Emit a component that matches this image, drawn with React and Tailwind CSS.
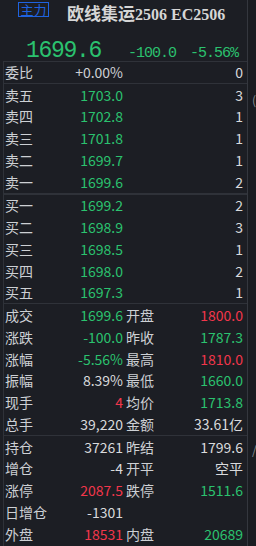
const green = 'text-[#2bc26f]';
const red = 'text-[#f2364b]';
const white = 'text-[#d9dadc]';

const asks = [
  ['卖五', '1703.0', '3'],
  ['卖四', '1702.8', '1'],
  ['卖三', '1701.8', '1'],
  ['卖二', '1699.7', '1'],
  ['卖一', '1699.6', '2'],
];

const bids = [
  ['买一', '1699.2', '2'],
  ['买二', '1698.9', '3'],
  ['买三', '1698.5', '1'],
  ['买四', '1698.0', '2'],
  ['买五', '1697.3', '1'],
];

const stats = [
  ['成交', '1699.6', green, '开盘', '1800.0', red],
  ['涨跌', '-100.0', green, '昨收', '1787.3', green],
  ['涨幅', '-5.56%', green, '最高', '1810.0', red],
  ['振幅', '8.39%', white, '最低', '1660.0', green],
  ['现手', '4', red, '均价', '1713.8', green],
  ['总手', '39,220', white, '金额', '33.61亿', white],
];

const position = [
  ['持仓', '37261', white, '昨结', '1799.6', white],
  ['增仓', '-4', white, '开平', '空平', white],
  ['涨停', '2087.5', red, '跌停', '1511.6', green],
  ['日增仓', '-1301', white, '', '', white],
  ['外盘', '18531', red, '内盘', '20689', green],
];

function BookRow({ label, price, vol, priceColor }) {
  return (
    <div className="h-[21.75px] flex items-center">
      <div className="w-[119px] flex items-center justify-between pl-[1px]">
        <span className="text-[#cdd0d4]">{label}</span>
        <span className={priceColor}>{price}</span>
      </div>
      <div className="w-[120px] text-right text-[#d9dadc]">{vol}</div>
    </div>
  );
}

function StatRow({ row }) {
  const [l1, v1, c1, l2, v2, c2] = row;
  return (
    <div className="h-[21.75px] flex items-center">
      <div className="w-[119px] flex items-center justify-between pl-[1px]">
        <span className="text-[#cdd0d4]">{l1}</span>
        <span className={c1}>{v1}</span>
      </div>
      <div className="w-[120px] flex items-center justify-between pl-[3px]">
        <span className="text-[#cdd0d4]">{l2}</span>
        <span className={c2}>{v2}</span>
      </div>
    </div>
  );
}

function App() {
  return (
    <div className="w-[256px] h-[546px] bg-[#1c1e24] flex overflow-hidden font-['Noto_Sans_CJK_SC',sans-serif] text-[14px] leading-none">
      <div className="w-[248px] shrink-0 flex flex-col border-r border-[#34373e]">
        <div className="h-[61px] shrink-0 flex flex-col">
          <div className="flex items-start pl-[18px] pt-[2px]">
            <div className="h-[15px] w-[31px] border border-[#1f63e0] text-[#1f63e0] text-[13px] flex items-center justify-center">
              主力
            </div>
            <div className="ml-[18px] mt-[2px] flex items-baseline text-[#d6d6d6] font-bold">
              <span className="text-[17px]">欧线集运</span>
              <span className="font-['Liberation_Serif',serif] text-[16px]">2506 EC2506</span>
            </div>
          </div>
          <div className={`mt-[17px] flex items-baseline font-['Liberation_Mono',monospace] ${green}`}>
            <span className="pl-[26px] text-[23px] tracking-[-1.3px]">1699.6</span>
            <span className="ml-auto text-[15px] tracking-[-1px]">-100.0</span>
            <span className="ml-[14px] mr-[9px] text-[15px] tracking-[-1px]">-5.56%</span>
          </div>
        </div>
        <div className="flex-1 ml-[3px] border-l border-t border-[#2f3239] flex flex-col">
          <div className="h-[21.75px] flex items-center border-b border-[#2f3239]">
            <div className="w-[119px] flex items-center justify-between pl-[1px]">
              <span className="text-[#cdd0d4]">委比</span>
              <span className="text-[#cdd0d4]">+0.00%</span>
            </div>
            <div className="w-[120px] text-right text-[#d9dadc]">0</div>
          </div>
          <div className="flex flex-col border-b-2 border-[#2f3239]">
            {asks.map(([l, p, v]) => (
              <BookRow key={l} label={l} price={p} vol={v} priceColor={green} />
            ))}
          </div>
          <div className="flex flex-col border-b border-[#2f3239]">
            {bids.map(([l, p, v]) => (
              <BookRow key={l} label={l} price={p} vol={v} priceColor={green} />
            ))}
          </div>
          <div className="flex flex-col border-b border-[#2f3239]">
            {stats.map(row => (
              <StatRow key={row[0]} row={row} />
            ))}
          </div>
          <div className="flex flex-col">
            {position.map(row => (
              <StatRow key={row[0]} row={row} />
            ))}
          </div>
        </div>
      </div>
      <div className="flex-1 bg-[#1a1c21] flex flex-col text-[#8a8d93] text-[12px] pl-[4px]">
        <span className="mt-[94px]">(</span>
        <span className="mt-[338px]">/</span>
      </div>
    </div>
  );
}

export default App;
